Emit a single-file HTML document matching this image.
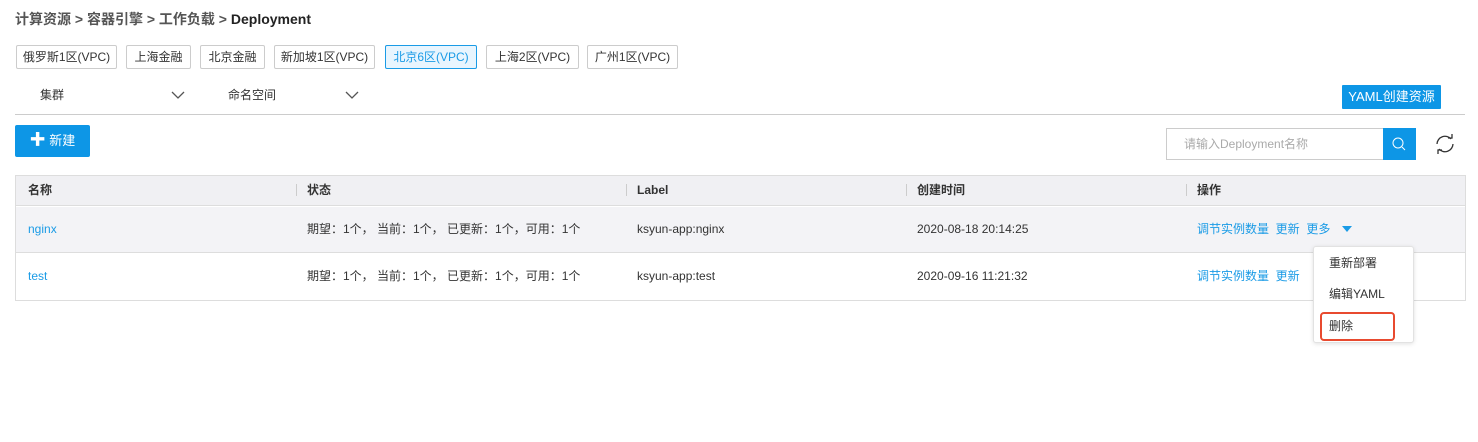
<!DOCTYPE html>
<html><head><meta charset="utf-8"><style>
*{box-sizing:border-box;margin:0;padding:0}
body{width:1478px;height:442px;background:#fff;font-family:"Liberation Sans","Noto Sans CJK SC",sans-serif;font-size:12px;color:#333;position:relative;overflow:hidden}
.a{position:absolute;line-height:16px;white-space:nowrap}
.tab{position:absolute;top:45px;height:24px;border:1px solid #ccc;border-radius:2px;line-height:22px;text-align:center;font-size:12px;color:#333;background:#fff;white-space:nowrap}
.tab.on{border-color:#1a9be6;color:#1a9be6;background:#e8f5fe}
.lnk{color:#1a9be6}
.hd{font-weight:bold}
</style></head><body>
<div class="a" style="left:15px;top:10px;font-size:14px;line-height:18px;color:#555;font-weight:bold">计算资源 &gt; 容器引擎 &gt; 工作负载 &gt; <span style="color:#222">Deployment</span></div>
<div class="tab" style="left:16px;width:101px">俄罗斯1区(VPC)</div>
<div class="tab" style="left:126px;width:65px">上海金融</div>
<div class="tab" style="left:200px;width:65px">北京金融</div>
<div class="tab" style="left:274px;width:101px">新加坡1区(VPC)</div>
<div class="tab on" style="left:385px;width:92px">北京6区(VPC)</div>
<div class="tab" style="left:486px;width:93px">上海2区(VPC)</div>
<div class="tab" style="left:587px;width:91px">广州1区(VPC)</div>
<div class="a" style="left:40px;top:87px">集群</div>
<svg class="a" style="left:171px;top:90px" width="14" height="10"><path d="M1 2l6 6 6-6" fill="none" stroke="#555" stroke-width="1.3"/></svg>
<div class="a" style="left:228px;top:87px">命名空间</div>
<svg class="a" style="left:345px;top:90px" width="14" height="10"><path d="M1 2l6 6 6-6" fill="none" stroke="#555" stroke-width="1.3"/></svg>
<div class="a" style="left:1342px;top:85px;width:99px;height:24px;background:#0d96e6;color:#fff;font-size:13px;line-height:24px;text-align:center;border-radius:1px">YAML创建资源</div>
<div class="a" style="left:15px;top:114px;width:1450px;height:1px;background:#ccc"></div>
<div class="a" style="left:15px;top:125px;width:75px;height:32px;background:#0d96e6;color:#fff;font-size:13px;line-height:32px;text-align:center;border-radius:2px"><b style="font-size:16px">✚</b> 新建</div>
<div class="a" style="left:1166px;top:128px;width:218px;height:32px;border:1px solid #ccc;color:#aaa;line-height:30px;padding-left:17px">请输入Deployment名称</div>
<div class="a" style="left:1383px;top:128px;width:33px;height:32px;background:#0d96e6"><svg width="33" height="32"><circle cx="15" cy="15" r="5" fill="none" stroke="#fff" stroke-width="1"/><path d="M19 19l3 3" stroke="#fff"/></svg></div>
<svg class="a" style="left:1433px;top:133px" width="24" height="22"><path d="M4 11a8 8 0 0 1 14-5M20 11a8 8 0 0 1-14 5" fill="none" stroke="#333" stroke-width="1.3"/><path d="M15 5h4V1M9 17H5v4" fill="none" stroke="#333" stroke-width="1.3"/></svg>
<div class="a" style="left:15px;top:175px;width:1451px;height:126px;border:1px solid #ddd"></div>
<div class="a" style="left:16px;top:176px;width:1449px;height:30px;background:#f0f0f3;border-bottom:1px solid #ddd"></div>
<div class="a" style="left:16px;top:207px;width:1449px;height:46px;background:#f3f3f6;border-bottom:1px solid #ddd"></div>
<div class="a hd" style="left:28px;top:182px">名称</div>
<div class="a" style="left:296px;top:184px;width:1px;height:12px;background:#ccc"></div>
<div class="a hd" style="left:307px;top:182px">状态</div>
<div class="a" style="left:626px;top:184px;width:1px;height:12px;background:#ccc"></div>
<div class="a hd" style="left:637px;top:182px">Label</div>
<div class="a" style="left:906px;top:184px;width:1px;height:12px;background:#ccc"></div>
<div class="a hd" style="left:917px;top:182px">创建时间</div>
<div class="a" style="left:1186px;top:184px;width:1px;height:12px;background:#ccc"></div>
<div class="a hd" style="left:1197px;top:182px">操作</div>
<div class="a lnk" style="left:28px;top:221px">nginx</div>
<div class="a" style="left:307px;top:221px">期望：1个， 当前：1个， 已更新：1个，可用：1个</div>
<div class="a" style="left:637px;top:221px">ksyun-app:nginx</div>
<div class="a" style="left:917px;top:221px">2020-08-18 20:14:25</div>
<div class="a lnk" style="left:1197px;top:221px">调节实例数量 &nbsp;更新 &nbsp;更多</div>
<svg class="a" style="left:1341px;top:225px" width="12" height="8"><path d="M1 1h10l-5 6z" fill="#1a9be6"/></svg>
<div class="a lnk" style="left:28px;top:268px">test</div>
<div class="a" style="left:307px;top:268px">期望：1个， 当前：1个， 已更新：1个，可用：1个</div>
<div class="a" style="left:637px;top:268px">ksyun-app:test</div>
<div class="a" style="left:917px;top:268px">2020-09-16 11:21:32</div>
<div class="a lnk" style="left:1197px;top:268px">调节实例数量 &nbsp;更新</div>
<div class="a" style="left:1313px;top:246px;width:101px;height:97px;background:#fff;border:1px solid #e2e2e2;border-radius:3px;box-shadow:0 1px 4px rgba(0,0,0,.12)"></div>
<div class="a" style="left:1329px;top:255px">重新部署</div>
<div class="a" style="left:1329px;top:286px">编辑YAML</div>
<div class="a" style="left:1320px;top:312px;width:75px;height:29px;border:2px solid #e84a2f;border-radius:4px"></div>
<div class="a" style="left:1329px;top:318px">删除</div>
</body></html>
